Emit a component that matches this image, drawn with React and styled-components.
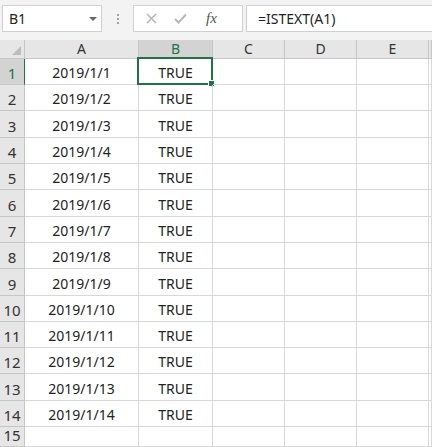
import React from 'react';
import styled, { createGlobalStyle } from 'styled-components';

const GlobalStyle = createGlobalStyle`
  html, body {
    margin: 0;
    padding: 0;
    background: #ffffff;
    overflow: hidden;
  }
  body {
    font-family: "Noto Sans", "Liberation Sans", Arial, sans-serif;
  }
`;

// last column is the sliver of F that shows at the right edge
const columns = ['A', 'B', 'C', 'D', 'E', ''];
const rows = Array.from({ length: 14 }, (_, i) => ({
  n: i + 1,
  a: `2019/1/${i + 1}`,
  b: 'TRUE',
}));

const Page = styled.div`
  width: 432px;
  height: 447px;
  display: flex;
  flex-direction: column;
  overflow: hidden;
`;

const Toolbar = styled.div`
  height: 43px;
  box-sizing: border-box;
  padding: 5px 0 0 2px;
  background: #f3f3f3;
  display: flex;
  align-items: flex-start;
`;

const Box = styled.div`
  height: 27px;
  box-sizing: border-box;
  background: #ffffff;
  border: 1px solid #d0d0d0;
  display: flex;
  align-items: center;
`;

const NameBox = styled(Box)`
  width: 100px;
  padding: 0 0 0 6px;
  justify-content: space-between;
  font-size: 14px;
  color: #222;
`;

const Caret = styled.span`
  width: 0;
  height: 0;
  margin-right: 4px;
  border-left: 4px solid transparent;
  border-right: 4px solid transparent;
  border-top: 4px solid #666;
`;

const Dots = styled.div`
  width: 31px;
  height: 27px;
  display: flex;
  flex-direction: column;
  align-items: center;
  justify-content: center;
  gap: 2px;
  span {
    width: 2px;
    height: 2px;
    background: #a0a0a0;
  }
`;

const ActionBox = styled(Box)`
  width: 110px;
  padding: 0 0 0 12px;
  gap: 17px;
`;

const Fx = styled.span`
  font-family: "Liberation Serif", "DejaVu Serif", serif;
  font-style: italic;
  font-size: 15px;
  color: #555;
  margin-left: 2px;
`;

const FormulaBox = styled(Box)`
  flex: 1;
  margin-left: 3px;
  padding-left: 11px;
  border-right: none;
  font-size: 14px;
  color: #222;
`;

const Sheet = styled.div`
  display: grid;
  grid-template-columns: 25px 114px 74px 72px 72px 72px 3px;
  grid-template-rows: 19px repeat(14, 26.3px) 20px;
  font-size: 14px;
  color: #222;
`;

const Cell = styled.div`
  position: relative;
  box-sizing: border-box;
  border-right: 1px solid #d8d8d8;
  border-bottom: 1px solid #d8d8d8;
  display: flex;
  align-items: flex-end;
  justify-content: center;
  padding-bottom: 2px;
  white-space: nowrap;
`;

const Header = styled(Cell)`
  background: ${p => (p.$active ? '#d3d3d3' : '#e6e6e6')};
  color: ${p => (p.$active ? '#217346' : '#333')};
  border-right-color: ${p => (p.$activeRow ? '#217346' : '#c6c6c6')};
  border-bottom-color: ${p => (p.$activeCol ? '#217346' : '#c6c6c6')};
  align-items: ${p => (p.$row ? 'flex-end' : 'center')};
  padding-bottom: ${p => (p.$row ? '1px' : '0')};
  font-size: ${p => (p.$row ? '15px' : '14px')};
`;

const Corner = styled(Header)`
  &::after {
    content: '';
    position: absolute;
    right: 3px;
    bottom: 3px;
    width: 0;
    height: 0;
    border-left: 9px solid transparent;
    border-bottom: 9px solid #bdbdbd;
  }
`;

const Selection = styled.div`
  position: absolute;
  left: -2px;
  top: -2px;
  right: -1px;
  bottom: -1px;
  border: 2px solid #217346;
  pointer-events: none;
`;

const Handle = styled.div`
  position: absolute;
  right: -4px;
  bottom: -4px;
  width: 5px;
  height: 5px;
  background: #217346;
  border: 1px solid #ffffff;
`;

const CrossIcon = () => (
  <svg width="11" height="11" viewBox="0 0 11 11">
    <path d="M1 1 L10 10 M10 1 L1 10" stroke="#b8b8b8" strokeWidth="1.6" fill="none" />
  </svg>
);

const CheckIcon = () => (
  <svg width="13" height="11" viewBox="0 0 13 11">
    <path d="M1 6 L4.5 9.5 L12 1.5" stroke="#b8b8b8" strokeWidth="2" fill="none" />
  </svg>
);

export default function App() {
  return (
    <Page>
      <GlobalStyle />
      <Toolbar>
        <NameBox>
          B1
          <Caret />
        </NameBox>
        <Dots>
          <span />
          <span />
          <span />
        </Dots>
        <ActionBox>
          <CrossIcon />
          <CheckIcon />
          <Fx>fx</Fx>
        </ActionBox>
        <FormulaBox>=ISTEXT(A1)</FormulaBox>
      </Toolbar>
      <Sheet>
        <Corner />
        {columns.map((c, i) => (
          <Header key={i} $active={c === 'B'} $activeCol={c === 'B'}>
            {c}
          </Header>
        ))}
        {rows.map(r => (
          <React.Fragment key={r.n}>
            <Header $row $active={r.n === 1} $activeRow={r.n === 1}>
              {r.n}
            </Header>
            <Cell>{r.a}</Cell>
            <Cell>
              {r.b}
              {r.n === 1 && (
                <Selection>
                  <Handle />
                </Selection>
              )}
            </Cell>
            <Cell />
            <Cell />
            <Cell />
            <Cell />
          </React.Fragment>
        ))}
        <Header $row>15</Header>
        {columns.map((c, i) => (
          <Cell key={i} />
        ))}
      </Sheet>
    </Page>
  );
}
